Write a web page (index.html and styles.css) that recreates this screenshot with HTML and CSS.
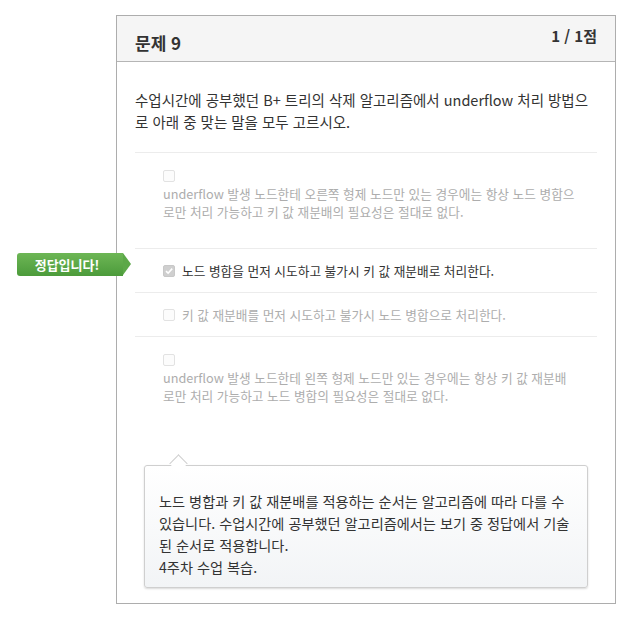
FILE: index.html
```html
<!DOCTYPE html>
<html lang="ko">
<head>
    <meta charset="UTF-8">
    <meta name="viewport" content="width=device-width, initial-scale=1.0">
    <title>문제 9</title>
    <link rel="stylesheet" href="styles.css">
</head>
<body>
    <div class="tarjeta">
        <div class="encabezado">
            <h2 class="titulo">문제 9</h2>
            <div class="puntos">1 / 1점</div>
        </div>
        <div class="cuerpo">
            <p class="pregunta">수업시간에 공부했던 B+ 트리의 삭제 알고리즘에서 underflow 처리 방법으로 아래 중 맞는 말을 모두 고르시오.</p>
            <div class="opciones">
                <div class="opcion larga">
                    <span class="casilla"></span>
                    <span class="etiqueta">underflow 발생 노드한테 오른쪽 형제 노드만 있는 경우에는 항상 노드 병합으로만 처리 가능하고 키 값 재분배의 필요성은 절대로 없다.</span>
                </div>
                <div class="opcion correcta">
                    <div class="insignia">정답입니다!</div>
                    <span class="casilla marcada">
                        <svg width="10" height="10" viewBox="0 0 10 10"><path d="M2 5.2 L4.1 7.2 L8.2 2.6" fill="none" stroke="#fff" stroke-width="1.6"/></svg>
                    </span>
                    <span class="etiqueta">노드 병합을 먼저 시도하고 불가시 키 값 재분배로 처리한다.</span>
                </div>
                <div class="opcion">
                    <span class="casilla"></span>
                    <span class="etiqueta">키 값 재분배를 먼저 시도하고 불가시 노드 병합으로 처리한다.</span>
                </div>
                <div class="opcion larga ultima">
                    <span class="casilla"></span>
                    <span class="etiqueta">underflow 발생 노드한테 왼쪽 형제 노드만 있는 경우에는 항상 키 값 재분배로만 처리 가능하고 노드 병합의 필요성은 절대로 없다.</span>
                </div>
            </div>
            <div class="comentario">
                노드 병합과 키 값 재분배를 적용하는 순서는 알고리즘에 따라 다를 수 있습니다. 수업시간에 공부했던 알고리즘에서는 보기 중 정답에서 기술된 순서로 적용합니다.<br>
                4주차 수업 복습.
            </div>
        </div>
    </div>
</body>
</html>
```

FILE: styles.css
```css
body {
    margin: 0;
    font-family: "Noto Sans CJK KR", "Noto Sans", sans-serif;
    color: #333;
    background-color: white;
}
.tarjeta {
    width: 498px;
    margin: 15px 0 0 116px;
    border: 1px solid #adadad;
}
.encabezado {
    display: flex;
    justify-content: space-between;
    align-items: flex-start;
    height: 45px;
    padding: 0 18px;
    background-color: #f5f5f5;
    border-bottom: 1px solid #b5b5b5;
}
.titulo {
    margin: 15px 0 0 0;
    font-size: 17px;
    line-height: 24px;
    font-weight: bold;
}
.puntos {
    margin-top: 10px;
    font-size: 15px;
    line-height: 20px;
    font-weight: bold;
}
.cuerpo {
    padding: 0 18px 15px 18px;
}
.pregunta {
    margin: 27px 0 19px 0;
    font-size: 14.5px;
    line-height: 22px;
}
.opcion {
    position: relative;
    display: flex;
    align-items: center;
    padding: 13px 0 12px 28px;
    border-top: 1px solid #ececec;
    font-size: 12.7px;
    line-height: 18px;
    color: #adadad; /* opciones deshabilitadas */
}
.opcion.larga {
    flex-direction: column;
    align-items: flex-start;
    padding-top: 14px;
    padding-bottom: 27px;
}
.opcion.ultima {
    padding-bottom: 0;
}
.opcion.correcta {
    color: #333;
}
.casilla {
    width: 10px;
    height: 10px;
    margin: 3px 7px 3px 0;
    border: 1px solid #e2e2e2;
    border-radius: 2px;
    background-color: #fcfcfc;
}
.casilla.marcada {
    background-color: #cfcfcf;
    border-color: #c8c8c8;
}
.casilla svg {
    display: block;
}
.etiqueta {
    max-width: 415px;
}
.insignia {
    position: absolute;
    top: 4px;
    left: -118px;
    width: 100px;
    height: 23px;
    padding-right: 6px;
    line-height: 23px;
    text-align: center;
    font-size: 13px;
    font-weight: bold;
    color: white;
    background: linear-gradient(#6db655, #4c9b3b);
    border-radius: 3px 0 0 3px;
}
.insignia::after {
    content: "";
    position: absolute;
    top: 0;
    right: -8px;
    border-top: 11.5px solid transparent;
    border-bottom: 11.5px solid transparent;
    border-left: 8px solid #5ca848;
}
.comentario {
    position: relative;
    margin: 60px 9px 0 9px;
    padding: 24px 14px 9px 14px;
    font-size: 14.2px;
    line-height: 22px;
    color: #333;
    border: 1px solid #cfcfcf;
    border-radius: 3px;
    background: linear-gradient(#ffffff, #f2f4f6);
    box-shadow: 0 1px 2px rgba(0,0,0,0.15);
}
.comentario::before {
    content: "";
    position: absolute;
    top: -9px;
    left: 27px;
    width: 12px;
    height: 12px;
    background-color: white;
    border-top: 1px solid #cfcfcf;
    border-left: 1px solid #cfcfcf;
    transform: rotate(45deg);
}
```
